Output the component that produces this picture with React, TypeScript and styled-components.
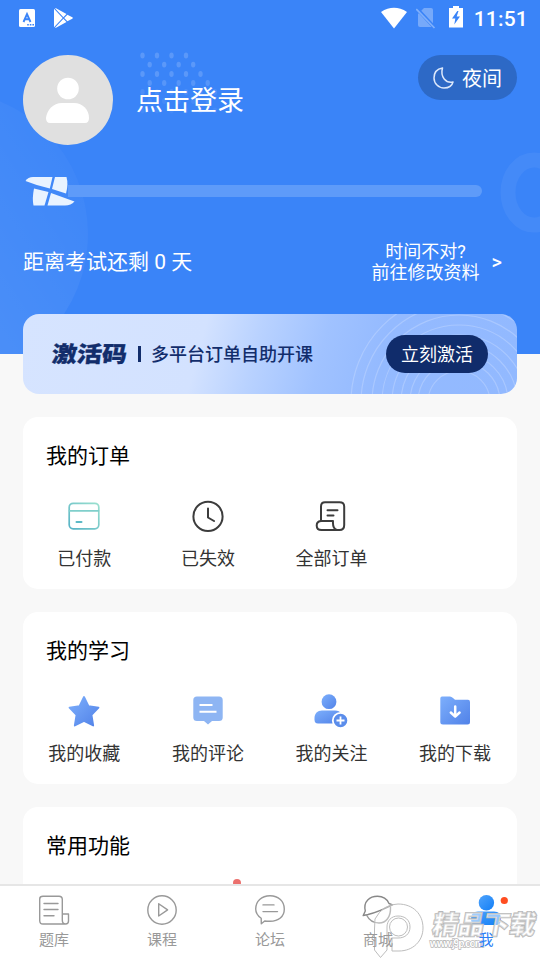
import React from "react";
import styled, { createGlobalStyle } from "styled-components";

const Global = createGlobalStyle`
  * { box-sizing: border-box; }
  body { margin: 0; background: #f8f8f8; font-family: Roboto, "Noto Sans CJK SC", sans-serif; }
  svg { display: block; }
`;

const Screen = styled.div`
  position: relative;
  width: 540px;
  height: 960px;
  overflow: hidden;
  display: flex;
  flex-direction: column;
  background: #f8f8f8;
`;
const Hero = styled.header`
  position: relative;
  height: 354px;
  flex: none;
  background: #3a84f8;
  color: #fff;
  isolation: isolate;
`;
const HeroArt = styled.svg`
  position: absolute;
  inset: 0;
  z-index: -1;
`;
const StatusBar = styled.div`
  height: 36px;
  padding: 0 12px 0 19px;
  display: flex;
  align-items: center;
  justify-content: space-between;
`;
const StatusGroup = styled.div<{ $gap: number }>`
  display: flex;
  align-items: center;
  gap: ${(p) => p.$gap}px;
`;
const Time = styled.span`
  font: 500 21px/36px Roboto, sans-serif;
  letter-spacing: 0.2px;
  padding-top: 2px;
`;
const Profile = styled.div`
  display: flex;
  height: 90px;
  margin: 19px 23px 0;
`;
const Avatar = styled.div`
  width: 90px;
  height: 90px;
  border-radius: 50%;
  background: #e0e0e0;
  overflow: hidden;
`;
const Login = styled.div`
  flex: 1;
  margin-left: 23px;
  font-size: 27px;
  line-height: 93px;
`;
const NightButton = styled.button`
  display: flex;
  align-items: center;
  gap: 7px;
  width: 99px;
  height: 45px;
  padding: 0 0 0 14px;
  border: 0;
  border-radius: 23px;
  background: #2d69c6;
  color: #fff;
  font: 20px/45px "Noto Sans CJK SC", sans-serif;
`;
const Progress = styled.div`
  display: flex;
  align-items: center;
  height: 30px;
  margin: 31px 58px 0 24px;
`;
const Track = styled.div`
  flex: 1;
  height: 12px;
  margin-left: -8px;
  border-radius: 0 6px 6px 0;
  background: #5e9bf9;
`;
const Countdown = styled.div`
  display: flex;
  align-items: center;
  justify-content: space-between;
  height: 42px;
  margin: 35px 38px 0 23px;
  font: 21px/42px Roboto, "Noto Sans CJK SC", sans-serif;
`;
const EditDate = styled.div`
  display: flex;
  align-items: center;
  gap: 12px;
  font: 18px/21px Roboto, "Noto Sans CJK SC", sans-serif;
  text-align: center;
`;
const Chevron = styled.span`
  font-size: 20px;
  font-weight: 500;
`;
const Banner = styled.section`
  position: relative;
  isolation: isolate;
  flex: none;
  display: flex;
  align-items: center;
  height: 80px;
  margin: -40px 23px 0;
  padding: 0 29px 0 29px;
  border-radius: 16px;
  overflow: hidden;
  color: #122d6b;
  background: linear-gradient(105deg, #d6e4ff 0%, #d3e2ff 36%, #b9d2ff 47%, #a0c2ff 60%, #94baff 72%, #92b9ff 100%);
`;
const BannerArt = styled.svg`
  position: absolute;
  right: 0;
  top: 0;
  z-index: -1;
`;
const Code = styled.strong`
  font: 900 25px/76px "Noto Sans CJK SC", sans-serif;
  height: 80px;
  transform: skewX(-6deg) scaleY(0.88);
  -webkit-text-stroke: 0.4px #122d6b;
`;
const Bar = styled.i`
  width: 3px;
  height: 16px;
  margin: 0 10px 0 11px;
  background: #122d6b;
`;
const Slogan = styled.span`
  flex: 1;
  white-space: nowrap;
  font: 500 18px/78px "Noto Sans CJK SC", sans-serif;
  height: 80px;
`;
const Activate = styled.button`
  width: 102px;
  height: 38px;
  border: 0;
  border-radius: 19px;
  padding: 0 0 2px;
  background: #102c6b;
  color: #fff;
  font: 18px/36px "Noto Sans CJK SC", sans-serif;
`;
const Card = styled.section`
  flex: none;
  height: 172px;
  margin: 23px 23px 0;
  border-radius: 15px;
  background: #fff;
`;
const CardTitle = styled.h2`
  margin: 0;
  padding: 22px 23px 0;
  font: 400 21px/30px "Noto Sans CJK SC", sans-serif;
  color: #000;
`;
const Grid = styled.div`
  display: grid;
  grid-template-columns: repeat(4, 123.6px);
  margin-left: -0.5px;
  padding-top: 29px;
`;
const Entry = styled.div`
  display: flex;
  flex-direction: column;
  align-items: center;
  gap: 10px;
  color: #333;
  font: 18px/26px "Noto Sans CJK SC", sans-serif;
`;
const Hint = styled.div`
  position: absolute;
  left: 233px;
  top: 879px;
  width: 8px;
  height: 8px;
  border-radius: 50%;
  background: #eb706d;
`;
const Nav = styled.nav`
  position: absolute;
  inset: auto 0 0;
  height: 76px;
  border-top: 2px solid #e6e6e6;
  background: #fff;
  display: grid;
  grid-template-columns: repeat(5, 1fr);
`;
const Tab = styled.div<{ $active?: boolean }>`
  display: flex;
  flex-direction: column;
  align-items: center;
  gap: 2px;
  padding-top: 8px;
  font: 15px/22px "Noto Sans CJK SC", sans-serif;
  color: ${(p) => (p.$active ? "#2b80f6" : "#999")};
`;
const TabLabel = styled.span`
  position: relative;
  z-index: 2;
`;
const Watermark = styled.svg`
  position: absolute;
  left: 360px;
  top: 890px;
  z-index: 1;
`;

const dotRows = [
  { x: 142.5, y: 55.5, n: 4, o: 0.17 },
  { x: 149.7, y: 64.6, n: 4, o: 0.17 },
  { x: 142.5, y: 74, n: 5, o: 0.17 },
  { x: 149.7, y: 83, n: 5, o: 0.15 },
  { x: 142.5, y: 92, n: 6, o: 0.09 },
  { x: 149.7, y: 101, n: 5, o: 0.06 },
  { x: 142.5, y: 110.5, n: 6, o: 0.05 },
];

const HeroBackdrop = () => (
  <HeroArt width="540" height="354">
    <defs>
      <linearGradient id="disc" x1="0" y1="1" x2="1" y2=".35">
        <stop offset=".45" stopColor="#fff" stopOpacity=".08" />
        <stop offset="1" stopColor="#fff" stopOpacity=".01" />
      </linearGradient>
    </defs>
    <ellipse cx="-52" cy="234" rx="140" ry="143" fill="#fff" fillOpacity=".02" />
    <ellipse cx="-52" cy="234" rx="140" ry="143" fill="url(#disc)" />
    <ellipse cx="534" cy="192.500" rx="26" ry="32.500" fill="none" stroke="#fff" strokeOpacity=".05" strokeWidth="15" />
    {dotRows.flatMap((r) =>
      Array.from({ length: r.n }, (_, i) => (
        <ellipse key={`${r.y}-${i}`} cx={r.x + i * 14.5} cy={r.y} rx="2.2" ry="2.9" fill="#fff" fillOpacity={r.o} />
      ))
    )}
  </HeroArt>
);

const line = { fill: "none", strokeLinecap: "round", strokeLinejoin: "round" } as const;

const BlueGradient = ({ id }: { id: string }) => (
  <defs>
    <linearGradient id={id} x1="0" y1="0" x2="1" y2="1">
      <stop stopColor="#7daffc" />
      <stop offset="1" stopColor="#5182e8" />
    </linearGradient>
  </defs>
);

const PaidIcon = () => (
  <svg width="36" height="36" viewBox="0 0 36 36" {...line} strokeWidth="1.7">
    <defs>
      <linearGradient id="paid" x1="0" y1="1" x2="1" y2="0">
        <stop stopColor="#55b2c5" />
        <stop offset="1" stopColor="#9be0cf" />
      </linearGradient>
    </defs>
    <rect x="3.200" y="5.300" width="29.600" height="25.500" rx="4" stroke="url(#paid)" />
    <path d="M3.500 12.800H32.500" stroke="#80cfcb" />
    <path d="M10.500 24H15.500" stroke="#5cb9c6" strokeWidth="2" />
  </svg>
);
const ExpiredIcon = () => (
  <svg width="36" height="36" viewBox="0 0 36 36" {...line} stroke="#3c3c3c" strokeWidth="2">
    <circle cx="18" cy="18.400" r="14.600" />
    <path d="M18 10.500V19.500L24 23" />
  </svg>
);
const OrdersIcon = () => (
  <svg width="36" height="36" viewBox="0 0 36 36" {...line} stroke="#3c3c3c" strokeWidth="2">
    <path d="M8 23V8.500C8 5.700 9.700 4.200 12 4.200H26.500C29.500 4.200 31.200 6 31.200 8.500V27C31.200 30 29.500 32 26.500 32H8.500C5.300 32 3.700 30 3.700 27.500S5.400 23 8.500 23H20C19.700 28 20.800 31.500 24 32" />
    <path d="M14.500 12.200H24.500M14.500 17.500H20.500" />
  </svg>
);
const StarIcon = () => (
  <svg width="36" height="36" viewBox="0 0 36 36">
    <BlueGradient id="star" />
    <path d="M18 4L22.500 13.200L32.500 14.700L25.500 22L27.200 32.500L18 28L8.800 32.500L10.500 22L3.500 14.700L13.500 13.200Z" fill="url(#star)" stroke="url(#star)" strokeWidth="1.800" strokeLinejoin="round" />
  </svg>
);
const CommentIcon = () => (
  <svg width="36" height="36" viewBox="0 0 36 36" fill="none">
    <path d="M7 3.500H29Q32.700 3.500 32.700 7V24.500Q32.700 28 29 28H22L18 31.500L14 28H7Q3.300 28 3.300 24.500V7Q3.300 3.500 7 3.500Z" fill="#8eb5f3" />
    <path d="M9.500 12H22.500M9.500 18.700H26.500" stroke="#fff" strokeWidth="2" />
  </svg>
);
const FollowIcon = () => (
  <svg width="36" height="36" viewBox="0 0 36 36">
    <BlueGradient id="follow" />
    <circle cx="16" cy="8.700" r="7.400" fill="url(#follow)" />
    <path d="M9 17.500H22C25 17.500 27 18.500 28 20.500V30.500H5C2.500 30.500 1.500 29 1.500 26.500V25C1.500 20.500 4.500 17.500 9 17.500Z" fill="url(#follow)" />
    <circle cx="27.500" cy="27.500" r="7.700" fill="#5b8deb" stroke="#fff" strokeWidth="1.800" />
    <path d="M23.500 27.500H31.500M27.500 23.500V31.500" stroke="#fff" strokeWidth="1.800" />
  </svg>
);
const DownloadIcon = () => (
  <svg width="36" height="36" viewBox="0 0 36 36">
    <BlueGradient id="download" />
    <path d="M5 3.500H13Q14.500 3.500 16 5L18 6.700H31Q33 6.700 33 9V29Q33 31.500 30.500 31.500H6Q3.300 31.500 3.300 29V5.500Q3.300 3.500 5 3.500Z" fill="url(#download)" />
    <path d="M18.200 13.500V23.500M13.800 19.500L18.200 23.700L22.600 19.500" {...line} stroke="#fff" strokeWidth="2.500" />
  </svg>
);

const BankIcon = () => (
  <svg width="32" height="32" viewBox="0 0 32 32" {...line} stroke="#999" strokeWidth="1.400">
    <path d="M27 30H5Q1.700 30 1.700 26.500V5Q1.700 2.200 5 2.200H21Q24.300 2.200 24.300 5.500V26Q24.300 30 27.500 30Q30.500 30 30.500 27V20H24.500" />
    <path d="M6 9.500H20M6 15.500H20M6 21.700H16" />
  </svg>
);
const CourseIcon = () => (
  <svg width="32" height="32" viewBox="0 0 32 32" {...line} stroke="#999" strokeWidth="1.400">
    <circle cx="16" cy="16" r="14.200" />
    <path d="M12.700 9.700V22L21.600 15.900Z" />
  </svg>
);
const ForumIcon = () => (
  <svg width="32" height="32" viewBox="0 0 32 32" {...line} stroke="#999" strokeWidth="1.400">
    <path d="M7.200 24.300C3.500 21.700 1.700 18.500 1.700 15C1.700 7.300 7.500 1.800 16 1.800S30.300 7.300 30.300 15S24.500 27.300 16 27.300Q12.500 27.300 10.700 27L7.300 29.700Z" />
    <path d="M9 10.900H20M9 17.600H23.500" />
  </svg>
);
const MallIcon = () => (
  <svg width="32" height="32" viewBox="0 0 32 32" {...line} stroke="#888" strokeWidth="1.400">
    <path d="M3.300 17C1 7 8 2.300 15.500 2.300C21 2.300 25 5 27 9.500L30.600 10.800C22 15 14 18.500 6 20.500L1.200 21.500L3.300 17" />
    <path d="M4.500 21C7 26 11 29 17 29C24 29 29 23 28.500 13" stroke="#999" />
  </svg>
);
const MeIcon = () => (
  <svg width="44" height="32" viewBox="0 0 44 32">
    <defs>
      <linearGradient id="me" x1="0" y1="0" x2="1" y2="1">
        <stop stopColor="#4fa3fc" />
        <stop offset="1" stopColor="#137ff6" />
      </linearGradient>
    </defs>
    <circle cx="22.400" cy="8.700" r="7.700" fill="url(#me)" />
    <path d="M14 17.500H30Q37 17.500 37 24.500Q37 31 33 31H11Q7 31 7 24.500Q7 17.500 14 17.500Z" fill="url(#me)" />
    <circle cx="40.300" cy="6.500" r="3.600" fill="#ff4d20" />
  </svg>
);

const tabs = [
  { label: "题库", icon: <BankIcon /> },
  { label: "课程", icon: <CourseIcon /> },
  { label: "论坛", icon: <ForumIcon /> },
  { label: "商城", icon: <MallIcon /> },
  { label: "我", icon: <MeIcon />, active: true },
];
const orders = [
  { label: "已付款", icon: <PaidIcon /> },
  { label: "已失效", icon: <ExpiredIcon /> },
  { label: "全部订单", icon: <OrdersIcon /> },
];
const study = [
  { label: "我的收藏", icon: <StarIcon /> },
  { label: "我的评论", icon: <CommentIcon /> },
  { label: "我的关注", icon: <FollowIcon /> },
  { label: "我的下载", icon: <DownloadIcon /> },
];

const Section = ({ title, items }: { title: string; items: { label: string; icon: React.ReactNode }[] }) => (
  <Card>
    <CardTitle>{title}</CardTitle>
    <Grid>
      {items.map((it) => (
        <Entry key={it.label}>
          {it.icon}
          {it.label}
        </Entry>
      ))}
    </Grid>
  </Card>
);

export default function App() {
  return (
    <Screen>
      <Global />
      <Hero>
        <HeroBackdrop />
        <StatusBar>
          <StatusGroup $gap={19}>
            <svg width="16" height="18" viewBox="0 0 16 18">
              <rect width="16" height="18" rx="1.500" fill="#fff" />
              <path d="M4.500 13L8 5L11.500 13M5.600 10.300H10.400" fill="none" stroke="#3a84f8" strokeWidth="1.900" />
              <path d="M8.200 15.800H15" stroke="#3a84f8" strokeWidth="1.400" strokeDasharray="1.600 1" />
            </svg>
            <svg width="19" height="20" viewBox="0 0 19 20" fill="#fff">
              <path d="M0 .8V19.200L8.700 10ZM.9 .2L9.400 9.200L12.500 6.100L2 .2ZM.9 19.800L9.400 10.800L12.500 13.900L2 19.800ZM10.200 10L13.400 6.800L18.300 9.300Q19.300 10 18.300 10.700L13.400 13.200Z" />
            </svg>
          </StatusGroup>
          <StatusGroup $gap={9}>
            <svg width="26" height="22" viewBox="0 0 26 22">
              <path d="M0 5Q13-3.300 26 5L13 21.500Z" fill="#fff" />
            </svg>
            <svg width="20" height="22" viewBox="0 0 20 22">
              <path d="M8 1H15Q17 1 17 3V18Q17 20 15 20H4Q2 20 2 18V7Z" fill="#76a9fa" />
              <path d="M.8 1.500L18.500 20.500" stroke="#3a84f8" strokeWidth="3.500" />
              <path d="M.3 2L18.500 21" stroke="#80b0fb" strokeWidth="1.700" />
            </svg>
            <svg width="20" height="24" viewBox="0 2 20 24">
              <path d="M4 4H8V1.500H14V4H18V23.500H4Z" fill="#fff" />
              <path d="M12.300 7L7 14.500H10.300L9.300 20.500L15 12.500H11.700L13.500 7Z" fill="#3a84f8" />
            </svg>
            <Time>11:51</Time>
          </StatusGroup>
        </StatusBar>
        <Profile>
          <Avatar>
            <svg width="90" height="90" fill="#fff">
              <circle cx="45" cy="33.500" r="10.800" />
              <path d="M39 48H51C60 48 66 55 66 63Q66 68 62 68H27Q23 68 23 63C24 55 30 48 39 48Z" />
            </svg>
          </Avatar>
          <Login>点击登录</Login>
          <NightButton>
            <svg width="23" height="24" viewBox="0 0 23 24" {...line} stroke="#dce8fb" strokeWidth="1.500">
              <path d="M10.500 2C4.500 3 2 7.500 2 12C2 17.500 6.500 22 12 22C16.500 22 20 20 21 16C14 17.500 8 11 10.500 2Z" />
            </svg>
            夜间
          </NightButton>
        </Profile>
        <Progress>
          <svg width="52" height="30" viewBox="0 0 52 30" fill="#e9f3ff">
            <path d="M1.500 5Q4 1 9 1H28.500L25.800 12.500Q14 10 1.500 5Z" />
            <path d="M31 1H42.500Q44.500 8 42 17.500L28 13Z" />
            <path d="M10 12.500L24.500 16L20.500 29.500H9.500Q8 22 10 12.500Z" />
            <path d="M27 17L50.500 25.500Q47 29.500 41 29.500H23.500Z" />
          </svg>
          <Track />
        </Progress>
        <Countdown>
          <span>距离考试还剩 0 天</span>
          <EditDate>
            <div>时间不对?<br />前往修改资料</div>
            <Chevron>&gt;</Chevron>
          </EditDate>
        </Countdown>
      </Hero>
      <Banner>
        <BannerArt width="180" height="80" fill="none" stroke="#c6daff" strokeOpacity=".45" strokeWidth="1.200">
          {[31, 41, 49, 58, 67, 77, 87, 98, 108].map((r) => (
            <circle key={r} cx="122" cy="88" r={r} />
          ))}
        </BannerArt>
        <Code>激活码</Code>
        <Bar />
        <Slogan>多平台订单自助开课</Slogan>
        <Activate>立刻激活</Activate>
      </Banner>
      <Section title="我的订单" items={orders} />
      <Section title="我的学习" items={study} />
      <Section title="常用功能" items={[]} />
      <Hint />
      <Nav>
        {tabs.map((t) => (
          <Tab key={t.label} $active={t.active}>
            {t.icon}
            <TabLabel>{t.label}</TabLabel>
          </Tab>
        ))}
        </Nav>
      <Watermark width="180" height="70">
        <g fill="#fff" fillOpacity=".35" stroke="#bdbdbd" strokeWidth="1">
          <path fillRule="evenodd" d="M15 29Q23 14 38 14C53 14 63 24 63 38C63 51 53 61 39 61H32V48H38C45 48 50 44 50 37S45 26 38 26S27 31 27 37V60L20.500 67.500L14.500 60V39Z" />
          <circle cx="38.500" cy="37" r="9" fill="none" />
        </g>
        <text x="71" y="44" fontFamily="Noto Sans CJK SC" fontSize="26" fontWeight="900" fill="#fff" fillOpacity=".5" stroke="#b8b8b8" strokeWidth="1.600" paintOrder="stroke" textLength="103" transform="translate(8 0) skewX(-10)">精品下载</text>
        <text x="70" y="57" fontFamily="Liberation Sans" fontSize="10.500" fontWeight="700" fill="#fff" stroke="#b8b8b8" strokeWidth="1.400" paintOrder="stroke" textLength="54">www.j9p.com</text>
      </Watermark>
    </Screen>
  );
}
